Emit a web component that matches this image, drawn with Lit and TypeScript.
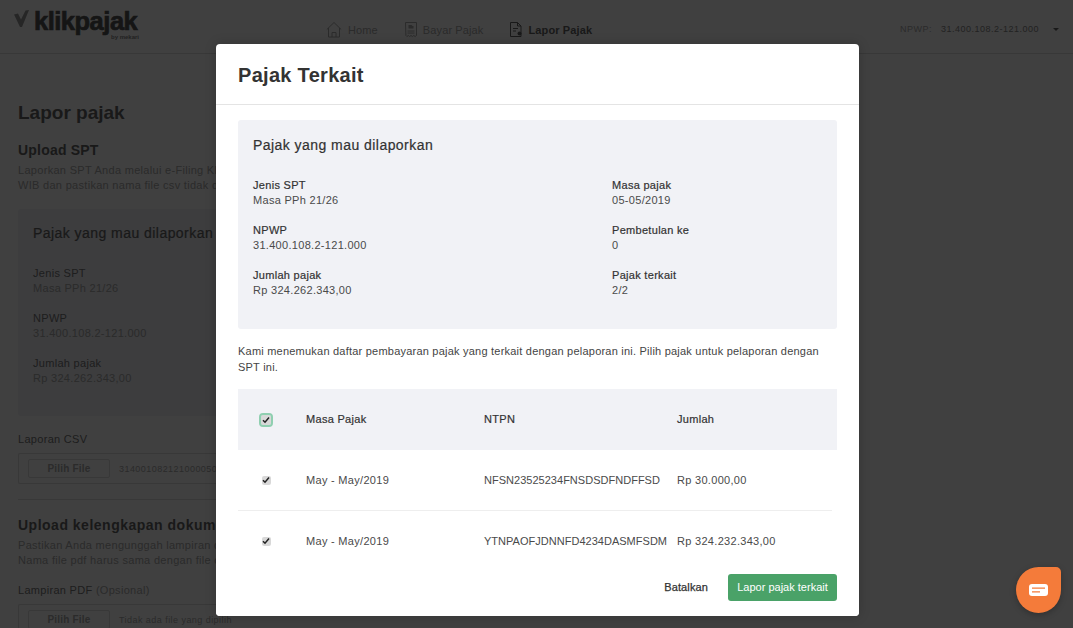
import { LitElement, html, css, svg } from 'lit';
import { customElement } from 'lit/decorators.js';

const FONT = css`"Liberation Sans", Arial, sans-serif`;

const summary = [
  ['Jenis SPT', 'Masa PPh 21/26', 'Masa pajak', '05-05/2019'],
  ['NPWP', '31.400.108.2-121.000', 'Pembetulan ke', '0'],
  ['Jumlah pajak', 'Rp 324.262.343,00', 'Pajak terkait', '2/2'],
];

const rows = [
  ['May - May/2019', 'NFSN23525234FNSDSDFNDFFSD', 'Rp 30.000,00'],
  ['May - May/2019', 'YTNPAOFJDNNFD4234DASMFSDM', 'Rp 324.232.343,00'],
];

const homeIcon = svg`<path d="M.8 8.500 8 1.500l7.200 7M2.500 7v9h11V7M6 16v-4.500h4V16" fill="none" stroke="currentColor" stroke-width="1"/>`;
const billIcon = svg`<path d="M1.500 1.500h11v13l-1.400 1-1.300-1-1.400 1-1.400-1-1.400 1-1.300-1-1.400 1-1-1zM3.500 10h7M3.500 12h7" fill="none" stroke="currentColor" stroke-width="1"/><path d="M4.500 4h3l1 1h1v2.500h-5z" fill="currentColor"/>`;
const reportIcon = svg`<path d="M1.500 1.500h7l3.500 3.500v10.500H1.500zM8.500 1.500V5H12M4 7.500h5M4 10h3" fill="none" stroke="currentColor" stroke-width="1"/><circle cx="10.500" cy="12.500" r="2" fill="currentColor"/>`;

@customElement('page-behind')
export class PageBehind extends LitElement {
  static styles = css`
    :host {
      display: block;
      height: 628px;
      overflow: hidden;
      background: #fff;
      color: #aaa;
      font-family: ${FONT};
      font-size: 11px;
    }
    .top {
      height: 53px;
      border-bottom: 1px solid #ddd;
      display: flex;
      align-items: flex-start;
      padding: 0 15px 0 14px;
    }
    .logo {
      position: relative;
      width: 125px;
      display: flex;
      gap: 4px;
      padding-top: 6px;
    }
    .logo svg {
      margin-top: 4px;
      flex: none;
    }
    .logo b {
      font-size: 25.5px;
      line-height: 30px;
      letter-spacing: -0.5px;
      font-weight: 700;
      color: #555;
      -webkit-text-stroke: 0.7px #555;
    }
    .logo small {
      position: absolute;
      right: 0;
      top: 34px;
      font-size: 6px;
      color: #888;
      font-weight: 700;
    }
    nav {
      display: flex;
      margin-left: 187px;
      padding-top: 20px;
      gap: 26px;
    }
    nav a {
      display: flex;
      align-items: center;
      gap: 5px;
      height: 20px;
      letter-spacing: 0.12px;
    }
    nav a:first-child {
      gap: 6px;
    }
    nav a.on {
      color: #666;
      font-weight: 700;
    }
    nav svg {
      width: 14px;
      height: 18px;
    }
    nav a:first-child svg {
      width: 16px;
    }
    .npwp {
      margin-left: auto;
      display: flex;
      padding-top: 24px;
      font-size: 9px;
      color: #888;
      letter-spacing: 0.5px;
      margin-right: -1px;
    }
    .npwp span:first-child {
      color: #aaa;
      margin-right: 9px;
    }
    .npwp i {
      width: 0;
      height: 0;
      margin: 4px 0 0 14px;
      border: 3px solid transparent;
      border-top: 3px solid #666;
      border-bottom: 0;
    }
    main {
      padding: 47px 18px 0;
      width: 620px;
    }
    h1 {
      margin: 0;
      font-size: 19px;
      line-height: 24px;
      color: #666;
    }
    h2 {
      margin: 15px 0 0;
      font-size: 14px;
      line-height: 20px;
      letter-spacing: 0.2px;
      color: #666;
    }
    p {
      margin: 3px 0 0;
      line-height: 15px;
      white-space: nowrap;
      letter-spacing: 0.3px;
    }
    .card {
      margin-top: 16px;
      height: 207px;
      background: #f1f2f6;
      padding: 15px;
      box-sizing: border-box;
      border-radius: 3px;
    }
    h3 {
      margin: 0;
      font-size: 14px;
      font-weight: 400;
      line-height: 18px;
      color: #666;
      letter-spacing: 0.45px;
      -webkit-text-stroke: 0.2px #666;
    }
    dl {
      margin: 24px 0 0;
    }
    dt {
      color: #777;
      line-height: 15px;
      letter-spacing: 0.3px;
    }
    dd {
      margin: 0 0 15px;
      line-height: 15px;
      letter-spacing: 0.3px;
    }
    .label {
      margin-top: 15px;
      color: #777;
      line-height: 15px;
      letter-spacing: 0.3px;
    }
    .label span {
      color: #aaa;
    }
    .label.first {
      margin-top: 16px;
    }
    .file {
      margin-top: 6px;
      height: 31px;
      box-sizing: border-box;
      border: 1px solid #ddd;
      border-right: 0;
      border-radius: 2px;
      padding: 0 9px;
      display: flex;
      align-items: center;
      gap: 9px;
      font-size: 9px;
      letter-spacing: 0.45px;
    }
    .file b {
      width: 82px;
      height: 19px;
      line-height: 17px;
      box-sizing: border-box;
      border: 1px solid #ddd;
      border-radius: 2px;
      text-align: center;
      font-size: 10px;
      letter-spacing: 0.2px;
    }
    hr {
      margin: 15px 0 0;
      border: 0;
      border-top: 1px solid #ddd;
    }
    h2.big {
      margin-top: 15px;
      letter-spacing: 0.5px;
    }
  `;

  render() {
    return html`
      <div class="top">
        <div class="logo">
          <svg width="16" height="18" viewBox="0 0 16 18"><path d="M0 4.500 4 3.500l3 6L11.500 .5 15 0 8 17H6z" fill="#999"/></svg>
          <b>klikpajak</b>
          <small>by mekari</small>
        </div>
        <nav>
          <a><svg viewBox="0 0 16 18">${homeIcon}</svg>Home</a>
          <a><svg viewBox="0 0 14 18">${billIcon}</svg>Bayar Pajak</a>
          <a class="on"><svg viewBox="0 0 14 18">${reportIcon}</svg>Lapor Pajak</a>
        </nav>
        <div class="npwp"><span>NPWP:</span><span>31.400.108.2-121.000</span><i></i></div>
      </div>
      <main>
        <h1>Lapor pajak</h1>
        <h2>Upload SPT</h2>
        <p>Laporkan SPT Anda melalui e-Filing Klikpajak paling lambat pukul 23.59<br />WIB dan pastikan nama file csv tidak diubah.</p>
        <div class="card">
          <h3>Pajak yang mau dilaporkan</h3>
          <dl>
            ${summary.map(r => html`<dt>${r[0]}</dt><dd>${r[1]}</dd>`)}
          </dl>
        </div>
        <div class="label first">Laporan CSV</div>
        <div class="file"><b>Pilih File</b>3140010821210000502019.csv</div>
        <hr />
        <h2 class="big">Upload kelengkapan dokumen</h2>
        <p>Pastikan Anda mengunggah lampiran dokumen pendukung SPT.<br />Nama file pdf harus sama dengan file csv yang diunggah.</p>
        <div class="label">Lampiran PDF <span>(Opsional)</span></div>
        <div class="file"><b>Pilih File</b>Tidak ada file yang dipilih</div>
      </main>
    `;
  }
}

@customElement('app-root')
export class AppRoot extends LitElement {
  static styles = css`
    :host {
      display: block;
      position: relative;
      width: 1073px;
      height: 628px;
      overflow: hidden;
      font-family: ${FONT};
      color: #4a4a4a;
      font-size: 11px;
    }
    .overlay {
      position: absolute;
      inset: 0;
      background: rgba(0, 0, 0, 0.75);
    }
    .modal {
      position: absolute;
      left: 216px;
      top: 44px;
      width: 643px;
      height: 572px;
      background: #fff;
      border-radius: 4px;
      display: flex;
      flex-direction: column;
      overflow: hidden;
      box-shadow: 0 0 12px rgba(0, 0, 0, 0.2);
    }
    header {
      flex: none;
      height: 58px;
      border-bottom: 1px solid #e4e4e4;
      padding: 2px 22px 0;
      display: flex;
      align-items: center;
    }
    h1 {
      margin: 0;
      font-size: 20px;
      color: #333;
      letter-spacing: 0.3px;
    }
    .body {
      flex: 1;
      min-height: 0;
      overflow: hidden;
      padding: 15px 22px 0;
    }
    .summary {
      height: 209px;
      box-sizing: border-box;
      background: #f1f2f6;
      border-radius: 3px;
      padding: 16px 15px;
    }
    h2 {
      margin: 0;
      font-size: 14px;
      line-height: 18px;
      font-weight: 400;
      letter-spacing: 0.45px;
      color: #333;
      -webkit-text-stroke: 0.2px #333;
    }
    .grid {
      display: grid;
      grid-template-columns: 359px 1fr;
      grid-auto-rows: 45px;
      margin-top: 24px;
    }
    .grid b {
      display: block;
      font-weight: 400;
      color: #333;
      line-height: 15px;
      letter-spacing: 0.3px;
      -webkit-text-stroke: 0.2px #333;
    }
    .grid span {
      display: block;
      line-height: 15px;
      letter-spacing: 0.3px;
    }
    .note {
      margin: 14px 0 0;
      line-height: 16px;
      letter-spacing: 0.22px;
      color: #444;
    }
    .row {
      display: grid;
      grid-template-columns: 68px 178px 193px 1fr;
      align-items: center;
      height: 61px;
      box-sizing: border-box;
      letter-spacing: 0.3px;
    }
    .row .ntpn {
      letter-spacing: 0.02px;
    }
    .row.head {
      margin-top: 14px;
      background: #f1f2f6;
      color: #333;
      -webkit-text-stroke: 0.2px #333;
    }
    .head .col {
      margin-top: -2px;
    }
    .row.item {
      width: 594px;
      border-bottom: 1px solid #eee;
    }
    .check {
      justify-self: start;
      margin-left: 23.5px;
      width: 9px;
      height: 9px;
      border-radius: 2px;
      background: #d8d8d8;
      display: flex;
      align-items: center;
      justify-content: center;
    }
    .head .check {
      margin-left: 23px;
      outline: 2px solid #8fcfb0;
      width: 10px;
      height: 10px;
    }
    footer {
      flex: none;
      height: 51px;
      padding: 9px 22px 0 0;
      box-sizing: border-box;
      display: flex;
      justify-content: flex-end;
      align-items: flex-start;
      gap: 20px;
      background: #fff;
    }
    .cancel {
      line-height: 27px;
      color: #333;
      letter-spacing: 0.12px;
      -webkit-text-stroke: 0.25px #333;
    }
    .go {
      width: 109px;
      height: 27px;
      line-height: 27px;
      text-align: center;
      background: #4aa268;
      color: #fff;
      border-radius: 3px;
    }
    .chat {
      position: absolute;
      left: 1016px;
      top: 567px;
      width: 45px;
      height: 46px;
      background: #f47b3a;
      border-radius: 50% 5px 50% 50%;
      display: flex;
      align-items: center;
      justify-content: center;
      box-shadow: 0 2px 6px rgba(0, 0, 0, 0.25);
    }
  `;

  private tick() {
    return html`<span class="check">
      <svg width="8" height="8" viewBox="0 0 8 8"><path d="M1 4.200 3 6.200 7 1.500" fill="none" stroke="#222" stroke-width="1.500"/></svg>
    </span>`;
  }

  render() {
    return html`
      <page-behind></page-behind>
      <div class="overlay"></div>
      <div class="modal">
        <header><h1>Pajak Terkait</h1></header>
        <div class="body">
          <div class="summary">
            <h2>Pajak yang mau dilaporkan</h2>
            <div class="grid">
              ${summary.map(r => html`
                <div><b>${r[0]}</b><span>${r[1]}</span></div>
                <div><b>${r[2]}</b><span>${r[3]}</span></div>
              `)}
            </div>
          </div>
          <p class="note">Kami menemukan daftar pembayaran pajak yang terkait dengan pelaporan ini. Pilih pajak untuk pelaporan dengan SPT ini.</p>
          <div class="row head">
            ${this.tick()}<span class="col">Masa Pajak</span><span class="col">NTPN</span><span class="col">Jumlah</span>
          </div>
          ${rows.map(r => html`
            <div class="row item">
              ${this.tick()}<span>${r[0]}</span><span class="ntpn">${r[1]}</span><span>${r[2]}</span>
            </div>
          `)}
        </div>
        <footer>
          <span class="cancel">Batalkan</span>
          <span class="go">Lapor pajak terkait</span>
        </footer>
      </div>
      <div class="chat">
        <svg width="19" height="12" viewBox="0 0 19 12">
          <path d="M3 0h13a3 3 0 0 1 3 3v6a3 3 0 0 1-3 3H3a3 3 0 0 1-3-3V3a3 3 0 0 1 3-3z" fill="#fff"/>
          <path d="M3 4.200h13M3 7.800h8" stroke="#f47b3a" stroke-width="1.300"/>
        </svg>
      </div>
    `;
  }
}
